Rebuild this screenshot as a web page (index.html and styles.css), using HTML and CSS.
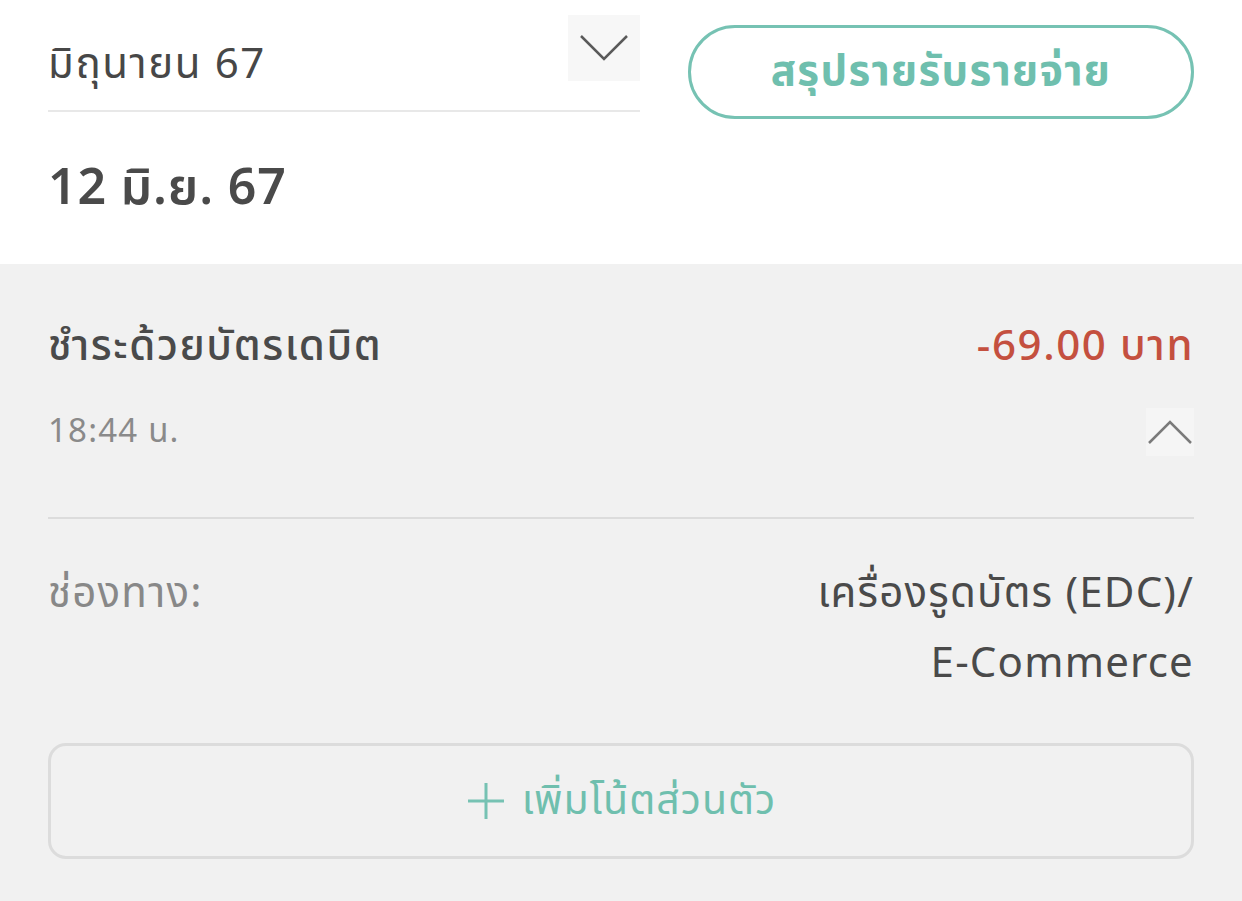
FILE: index.html
```html
<!DOCTYPE html>
<html lang="th">
<head>
    <meta charset="UTF-8">
    <meta name="viewport" content="width=device-width, initial-scale=1.0">
    <title>รายการเดินบัญชี</title>
    <link rel="stylesheet" href="styles.css">
</head>
<body>

    <div class="top">
        <div class="filter-row">
            <div class="month-select">
                <span class="month-text">มิถุนายน 67</span>
                <span class="chev-box">
                    <svg width="50" height="30" viewBox="0 0 50 30"><path d="M2 3 L25 26 L48 3" fill="none" stroke="#5a5a5a" stroke-width="2.5"/></svg>
                </span>
            </div>
            <button class="summary-btn">สรุปรายรับรายจ่าย</button>
        </div>
        <h2 class="day-title">12 มิ.ย. 67</h2>
    </div>

    <div class="detail">
        <div class="tx-head">
            <div class="tx-name">ชำระด้วยบัตรเดบิต</div>
            <div class="tx-amount">-69.00 บาท</div>
        </div>
        <div class="tx-sub">
            <div class="tx-time">18:44 น.</div>
            <span class="chev-box small">
                <svg width="46" height="26" viewBox="0 0 46 26"><path d="M2 24 L23 3 L44 24" fill="none" stroke="#7a7a7a" stroke-width="2.5"/></svg>
            </span>
        </div>

        <div class="divider"></div>

        <div class="info-row">
            <div class="info-label">ช่องทาง:</div>
            <div class="info-value">เครื่องรูดบัตร (EDC)/<br>E-Commerce</div>
        </div>

        <button class="note-btn">
            <svg width="40" height="40" viewBox="0 0 40 40"><path d="M20 2 V38 M2 20 H38" stroke="#76c2b3" stroke-width="3"/></svg>
            <span>เพิ่มโน้ตส่วนตัว</span>
        </button>
    </div>

</body>
</html>
```

FILE: styles.css
```css
body {
    font-family: "Noto Sans Thai", "Noto Sans", "DejaVu Sans", sans-serif;
    margin: 0;
    padding: 0;
    background-color: #f1f1f1;
    color: #4a4a4a;
    letter-spacing: 1.2px;
}

.top {
    background-color: #fff;
    padding: 15px 48px 0 48px;
    height: 249px;
}

.filter-row {
    display: flex;
    align-items: flex-start;
    gap: 48px;
}

.month-select {
    width: 592px;
    height: 95px;
    display: flex;
    justify-content: space-between;
    align-items: flex-start;
    border-bottom: 2px solid #e8e8e8;
}

.month-text {
    font-size: 42px;
    margin-top: 25px;
    line-height: 50px;
    letter-spacing: 1.6px;
    color: #474747;
}

.chev-box {
    display: flex;
    align-items: center;
    justify-content: center;
    width: 72px;
    height: 66px;
    background-color: #f7f7f7;
}

.chev-box.small {
    width: 48px;
    height: 48px;
    background-color: #f5f5f5;
}

.summary-btn {
    margin-top: 10px;
    width: 506px;
    height: 94px;
    border: 3px solid #76c2b3;
    border-radius: 47px;
    background-color: #fff;
    color: #6fbfae;
    font-family: inherit;
    font-size: 42px;
    font-weight: bold;
    letter-spacing: 1.3px;
    cursor: pointer;
}

.day-title {
    margin: 38px 0 0 0;
    font-size: 50px;
    font-weight: 600;
    line-height: 64px;
    color: #4a4a4a;
    letter-spacing: 0.8px;
}

.detail {
    padding: 0 48px;
}

.tx-head {
    display: flex;
    justify-content: space-between;
    padding-top: 55px;
    font-size: 42px;
    line-height: 56px;
    font-weight: 500;
    letter-spacing: 1.6px;
}

.tx-amount {
    color: #c4503f;
}

.tx-sub {
    display: flex;
    justify-content: space-between;
    align-items: center;
    margin-top: 32px;
}

.tx-time {
    font-size: 33px;
    color: #8a8a8a;
}

.divider {
    height: 2px;
    background-color: #dcdcdc;
    margin-top: 60px;
}

.info-row {
    display: flex;
    justify-content: space-between;
    padding-top: 40px;
    font-size: 42px;
    line-height: 70px;
}

.info-label {
    color: #888;
}

.info-value {
    text-align: right;
}

.note-btn {
    margin-top: 44px;
    width: 100%;
    height: 116px;
    border: 3px solid #dcdcdc;
    border-radius: 18px;
    background-color: #f1f1f1;
    color: #6fbfae;
    font-family: inherit;
    font-size: 41px;
    letter-spacing: 1px;
    display: flex;
    align-items: center;
    justify-content: center;
    gap: 16px;
    cursor: pointer;
}
```
